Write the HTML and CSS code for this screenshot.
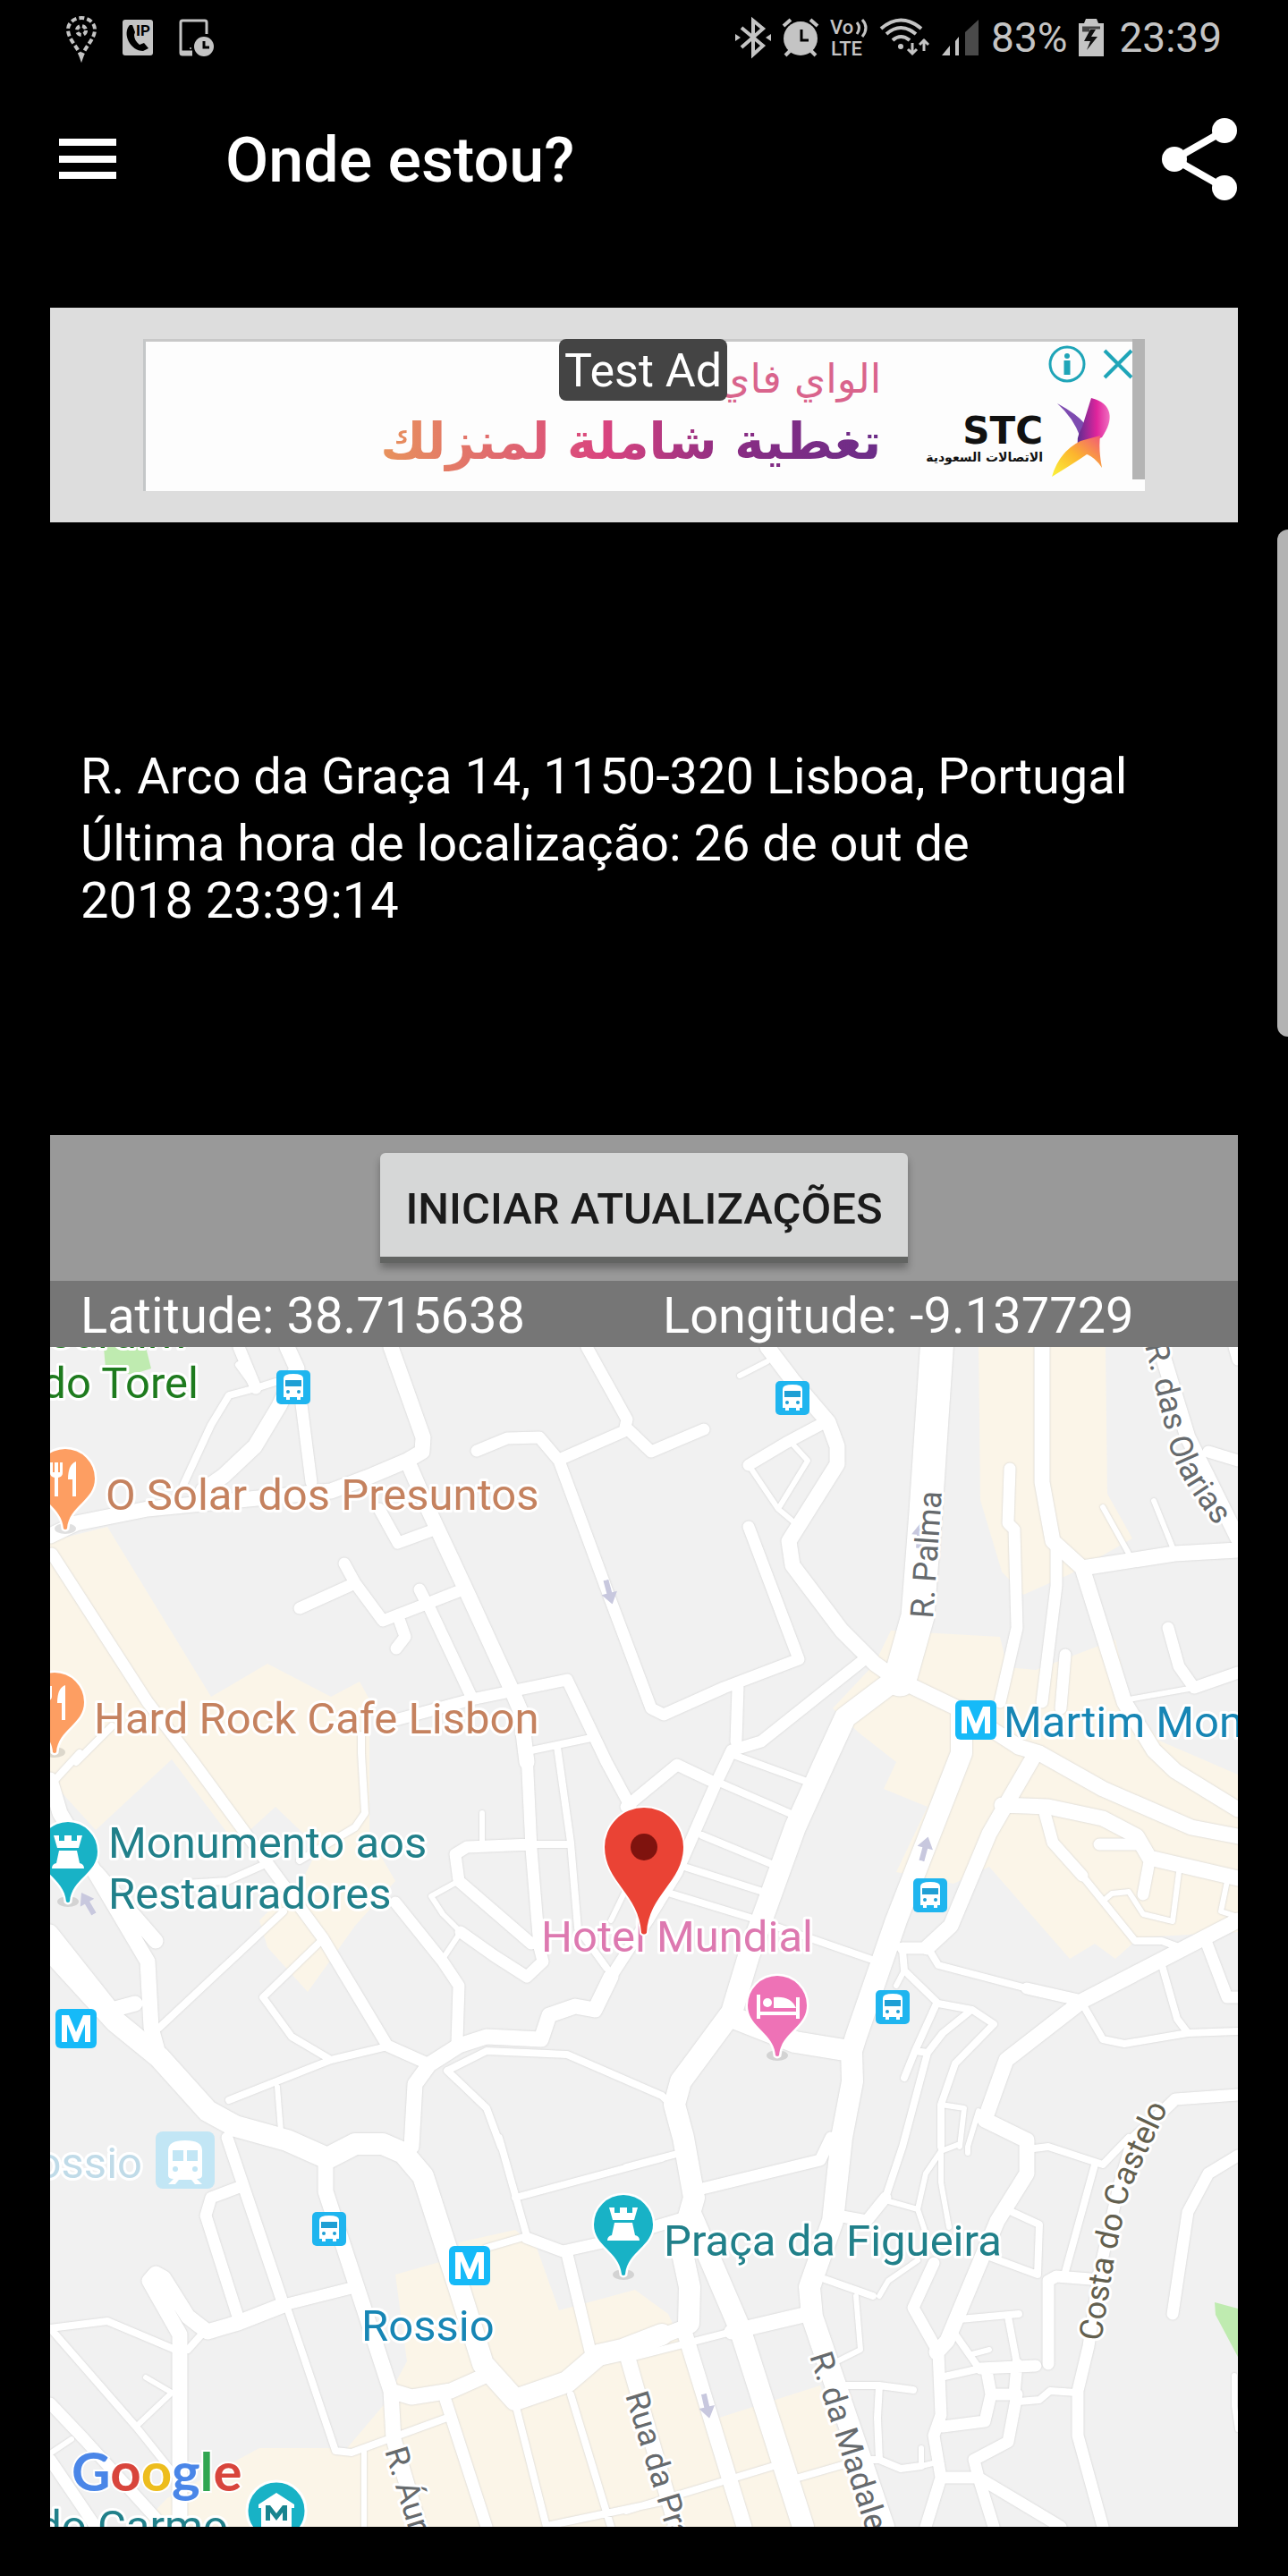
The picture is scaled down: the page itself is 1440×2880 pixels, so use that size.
FILE: index.html
```html
<!DOCTYPE html>
<html lang="pt">
<head>
    <meta charset="UTF-8">
    <meta name="viewport" content="width=device-width, initial-scale=1.0">
    <title>Onde estou?</title>
    <link rel="stylesheet" href="styles.css">
</head>
<body>

    <div class="status-bar">
        <div class="status-group notifications">
            <svg width="34" height="48" viewBox="0 0 34 48" fill="none" stroke="#c4c4c4" stroke-width="4">
                <path d="M17 46C13 34 2 26 2 15a15 13 0 0 1 30 0c0 11-11 19-15 31z" stroke-dasharray="6 3"/>
                <circle cx="17" cy="16" r="5" stroke-dasharray="5 3"/>
            </svg>
            <svg width="36" height="42" viewBox="0 0 36 42">
                <rect x="1" y="1" width="34" height="40" rx="3" fill="#c4c4c4"/>
                <path d="M9 7c-9 10 1 29 15 29l6-3-5-6-5 2c-4-3-6-7-6-11l1-3-3-8z" fill="#000"/>
                <text class="ip-text" x="16" y="19">IP</text>
            </svg>
            <svg width="40" height="42" viewBox="0 0 40 42" fill="none">
                <path d="M31 17V4q0-2-2-2H4Q2 2 2 4v34q0 2 2 2h11M3 37h12" stroke="#c4c4c4" stroke-width="3"/>
                <circle cx="28" cy="31" r="11" fill="#c4c4c4"/>
                <path d="M28 25v7h6" stroke="#000" stroke-width="3"/>
                <circle cx="13" cy="33" r="1" fill="#c4c4c4"/>
            </svg>
        </div>
        <div class="status-group system">
            <svg width="40" height="44" viewBox="0 0 40 44">
                <path d="M7 11l24 20-11 10V3l11 9L7 33" fill="none" stroke="#c4c4c4" stroke-width="4"/>
                <path d="M0 18l6 4-6 4zM40 18l-6 4 6 4z" fill="#c4c4c4"/>
            </svg>
            <svg width="42" height="44" viewBox="0 0 42 44">
                <circle cx="21" cy="23" r="19" fill="#c4c4c4"/>
                <path d="M2 9l8-7M40 9l-8-7M9 37l-5 5M33 37l5 5" stroke="#c4c4c4" stroke-width="4"/>
                <path d="M22 13v12h8" fill="none" stroke="#000" stroke-width="3"/>
            </svg>
            <svg width="44" height="44" viewBox="0 0 44 44">
                <text class="volte-text" x="0" y="18">Vo</text>
                <text class="volte-text" x="1" y="42">LTE</text>
                <path d="M30 5q5 6 0 13M36 2q8 9 0 19" fill="none" stroke="#c4c4c4" stroke-width="3"/>
            </svg>
            <svg width="56" height="44" viewBox="0 0 56 44" fill="none" stroke="#c4c4c4" stroke-width="4">
                <path d="M1 12Q23-7 46 12M7 18q16-14 33 0M14 25q9-8 19 0"/>
                <circle cx="23" cy="32" r="3" fill="#c4c4c4" stroke="none"/>
                <path d="M36 28v12M31 35l5 5 5-5M49 37V24M44 30l5-5 5 5" stroke-width="3"/>
            </svg>
            <svg width="44" height="44" viewBox="0 0 44 44">
                <path d="M1 42l9-11v11zM16 42V26l4-5v21z" fill="#c4c4c4"/>
                <path d="M27 42V16L42 2v40z" fill="#4a4a4a"/>
            </svg>
            <span class="battery-level">83%</span>
            <svg width="30" height="44" viewBox="0 0 30 44">
                <path d="M1 6h6l2-5h12l2 5h6v37H1z" fill="#c4c4c4"/>
                <path d="M5 11h20M5 14h8" stroke="#444" stroke-width="3"/>
                <path d="M14 13l-7 13h7l-4 10 12-15h-7l5-8z" fill="#111"/>
            </svg>
            <span class="clock">23:39</span>
        </div>
    </div>

    <header class="app-bar">
        <button class="icon-btn" aria-label="Menu">
            <svg width="64" height="48" viewBox="0 0 64 48"><path d="M0 5h64M0 24h64M0 42h64" stroke="#fff" stroke-width="8"/></svg>
        </button>
        <h1>Onde estou?</h1>
        <button class="icon-btn" aria-label="Partilhar">
            <svg width="86" height="92" viewBox="0 0 86 92">
                <path d="M71 14L15 46l56 32" fill="none" stroke="#fff" stroke-width="8"/>
                <circle cx="71" cy="14" r="14" fill="#fff"/><circle cx="15" cy="46" r="14" fill="#fff"/><circle cx="71" cy="78" r="14" fill="#fff"/>
            </svg>
        </button>
    </header>

    <main>
        <section class="ad">
            <div class="banner">
                <span class="test-ad">Test Ad</span>
                <div class="ad-copy" lang="ar" dir="rtl">
                    <p class="ad-line-small">الواي فاي</p>
                    <p class="ad-line-big">تغطية شاملة لمنزلك</p>
                </div>
                <div class="sponsor">
                    <div class="sponsor-name">
                        <strong>STC</strong>
                        <span lang="ar" dir="rtl">الاتصالات السعودية</span>
                    </div>
                    <svg width="72" height="92" viewBox="0 0 72 92">
                        <defs>
                            <linearGradient id="wing" x1="0" y1="0" x2="1" y2="0"><stop offset="0" stop-color="#5c2d91"/><stop offset=".6" stop-color="#e0249c"/><stop offset="1" stop-color="#f06fc0"/></linearGradient>
                            <linearGradient id="tail" x1="1" y1="0" x2="0" y2="1"><stop offset="0" stop-color="#f2567a"/><stop offset=".5" stop-color="#fcb52e"/><stop offset="1" stop-color="#fbf43a"/></linearGradient>
                        </defs>
                        <path d="M10 8q22 12 30 22l-4 16Q28 24 10 8z" fill="#7d4bb0"/>
                        <path d="M48 2c24 6 26 24 12 44L34 56q-4-8 4-22z" fill="url(#wing)"/>
                        <path d="M58 44q-2 16 2 36-8-12-17-15Q30 74 4 90 12 62 36 50z" fill="url(#tail)"/>
                    </svg>
                </div>
                <div class="ad-controls">
                    <button aria-label="Informações do anúncio">
                        <svg width="44" height="44" viewBox="0 0 44 44"><circle cx="22" cy="22" r="19" fill="none" stroke="#1fa5b8" stroke-width="3"/><circle cx="22" cy="13" r="3" fill="#1fa5b8"/><path d="M22 18v16" stroke="#1fa5b8" stroke-width="7"/></svg>
                    </button>
                    <button aria-label="Fechar anúncio">
                        <svg width="32" height="32" viewBox="0 0 32 32"><path d="M1 1l30 30M31 1L1 31" stroke="#1fa5b8" stroke-width="4"/></svg>
                    </button>
                </div>
                <span class="ad-scroll"></span>
            </div>
        </section>

        <section class="address">
            <p>R. Arco da Graça 14, 1150-320 Lisboa, Portugal</p>
            <p>Última hora de localização: 26 de out de<br>2018 23:39:14</p>
        </section>

        <div class="actions">
            <button class="update-btn">INICIAR ATUALIZAÇÕES</button>
        </div>

        <div class="coords">
            <span>Latitude: 38.715638</span>
            <span>Longitude: -9.137729</span>
        </div>

        <svg class="map" viewBox="0 0 1328 1319" role="img" aria-label="Mapa">
            <defs>
                <symbol id="bus" viewBox="0 0 38 38">
                    <rect width="38" height="38" rx="5" fill="#1fb5ef"/>
                    <path d="M8 9q0-5 11-5t11 5v21h-3v3h-4v-3h-8v3h-4v-3H8z" fill="#fff"/>
                    <path d="M10 11h18v7H10z" fill="#1f9fd4"/>
                    <circle cx="13" cy="24" r="2" fill="#1f9fd4"/><circle cx="25" cy="24" r="2" fill="#1f9fd4"/>
                </symbol>
                <symbol id="metro" viewBox="0 0 46 44">
                    <rect width="46" height="44" rx="6" fill="#16baf8"/>
                    <path d="M7 37V7h8l8 19 8-19h8v30h-6V17l-8 20h-4l-8-20v20z" fill="#fff"/>
                </symbol>
                <symbol id="pin" viewBox="-36 -36 72 96" overflow="visible">
                    <ellipse cx="0" cy="56" rx="12" ry="6" fill="#000" opacity=".12"/>
                    <path d="M-2 56C-4 30-33 25-33 0a33 33 0 0 1 66 0C33 25 4 30 2 56q-2 2-4 0z" stroke="#fff" stroke-width="5" paint-order="stroke"/>
                </symbol>
                <symbol id="tower" viewBox="0 0 40 40">
                    <path d="M4 1h6v6h6V1h8v6h6V1h6l-4 14H8zM10 18h20l3 14q5 1 5 6H2q0-5 5-6z" fill="#fff"/>
                </symbol>
                <symbol id="fork" viewBox="0 0 34 40">
                    <path d="M2 1v12q0 4 5 5v21h4V18q5-1 5-5V1h-3v11h-2V1H7v11H5V1zM31 0q-9 3-9 20h5v19h4z" fill="#fff"/>
                </symbol>
                <symbol id="arrow" viewBox="0 0 18 28">
                    <path d="M9 0l9 13h-6v15H6V13H0z" fill="#c8c8de"/>
                </symbol>
                <path id="olarias" d="M1224-2L1237 50L1252 112Q1262 150 1312 210"/>
                <path id="castelo" d="M1175 1112L1190 1018L1206 944L1250 850"/>
            </defs>

            <!-- commercial areas and parks -->
            <g fill="#fbf5e8">
                <path d="M0 217L64 201L180 391L243 354L314 391L346 374L357 394V547L386 597L341 647L288 721L243 671L234 641L285 590L300 560L252 514L207 555L136 461L51 540L0 484z"/>
                <path d="M1038 0H1180L1182 164L1210 214L1140 254L1088 277L1064 251L1040 171z"/>
                <path d="M922 354L940 317L1062 324L1070 358L1102 361L1191 327L1206 394L1240 440L1328 478V654L1218 660L1191 684L1168 667L1140 684L1050 581L1010 600L946 587L981 514L932 494L946 464L904 431L875 404z"/>
                <path d="M386 1037L457 1017V1001L520 987L544 1007L569 1077L654 1054L691 1081L708 1117L748 1197L861 1161L922 1319H100L131 1287L234 1231H332L372 1184L399 1134z"/>
            </g>
            <path d="M60 0H107L113 24L91 31L62 24zM1302 1068L1328 1075V1129L1303 1082z" fill="#bfebb0"/>

            <g class="roads">
                <g class="lane-xs">
                    <path d="M802 16L771 32M781 132L814 181L833 197M826 104L847 127L814 181M645 604L627 641M1234 172L1255 224M1177 179L1206 231M1206 394L1279 381"/>
                    <path d="M955 697L946 714M1180 617L1187 611L1206 609L1222 634L1255 642L1262 587M1316 597L1309 631L1328 637"/>
                    <path d="M996 847L1022 851L1017 894M1038 854L1026 894V901M996 884V934L1005 984M1017 891L996 899L979 924L970 964L979 991M934 954L970 964"/>
                    <path d="M970 1021L937 1044L927 1061M901 1061L906 1121L880 1134M1031 1126L1050 1121M974 1251L974 1231M974 1251L991 1247"/>
                    <path d="M351 1234V1319M96 1207L136 1169L107 1152M0 1237L24 1221M254 827L258 877M483 521V554M439 684L459 654L439 634L426 614L457 597M1324 1150V1184L1328 1210"/>
                </g>
                <g class="lane-s">
                    <path d="M211 20L230 46L200 54L180 87L149 154M230 46L252 39M538 451L605 437M567 447L582 554L590 650L622 694M764 456L849 487M748 487L833 524M729 546L809 579M712 582L797 609M694 611L786 639L922 686"/>
                    <path d="M981 671L993 691L1092 717M1154 591L1213 664H1243L1262 671M1243 691L1260 751L1272 767L1328 765M1154 734L1177 774L1201 779L1272 767"/>
                    <path d="M953 674L955 697L993 734L1031 741L1055 757L1012 801L996 847V894M991 734L967 787L955 817M1029 742L998 767L981 789L953 894L934 951M967 787L981 789"/>
                    <path d="M1069 964L1106 981L1104 1037L1050 1017M866 1042L920 1061M1017 1087L1083 1081M1071 1084L1081 1137M1012 1104L1040 1144M1000 1151L1040 1142"/>
                    <path d="M1083 1179L1106 1177L1118 1167L1147 1169M885 1161H927L965 1166M927 1161L925 1197L927 1244L951 1254L974 1251M900 1244H927M1168 914L1135 1034M1092 897L1116 894L1177 914L1206 884"/>
                    <path d="M653 1129L762 1101M644 1301L809 1251M837 1264L889 1249M644 917L701 902M684 907L520 951M502 884L533 994L488 1007M520 1181L555 1319M582 1171L627 1319M560 1317L684 1291"/>
                    <path d="M265 1074L319 1234L337 1236L444 1197M0 1097L64 1089L140 1121M154 1121L172 1101M0 1097L96 1207L140 1262M33 454L0 490M69 424L29 464"/>
                    <path d="M348 434V454L352 521L341 537L279 574M243 577L198 597L150 600M261 631L122 761M303 664L238 727L270 771L314 797M200 842L314 797L377 782M538 556H580M444 809L488 787L578 791L684 837L698 850M444 809L488 851L504 894"/>
                </g>
                <g class="lane-m">
                    <path d="M211 0L230 46M281 64L292 151M368 181L389 219L430 204M329 242L341 264L372 306L421 287L462 271M279 292L341 264M413 271L421 287M390 304L397 324L387 337M424 291L471 391M386 417L471 394L578 372L622 464L649 514"/>
                    <path d="M477 116L511 102L547 101L569 127L627 284L672 404L686 411L753 381L837 349L781 201M600 0L645 81L642 94L569 126M645 91L672 117L731 92M870 82L823 107L781 132M769 381L767 441"/>
                    <path d="M1073 136L1071 197L1078 204L1081 314L1062 397M1125 224V267L1109 397M1135 344L1130 404M1250 314L1262 357L1279 381L1328 364M1295 117L1328 127M1324 0L1328 14"/>
                    <path d="M908 351L795 441L762 451L743 491L701 587L668 641L627 704M743 487L701 467L644 514M953 672H981M1173 556H1215M1229 575L1222 612M1111 517L1121 554L1154 591M1092 717L1154 731M1291 661L1316 727H1328"/>
                    <path d="M934 951L913 977L880 971M988 1024L965 1074L993 1124L996 1194L988 1217L996 1264L979 1319M1040 1142L1102 1139M1047 1144L1052 1171H1078L1081 1137M1052 1171L1045 1201L998 1207M1081 1171L1071 1224L1033 1244L1038 1264L1055 1319M1038 1264L1130 1319M998 1264H1038"/>
                    <path d="M1328 836L1258 841L1210 887L1196 934L1173 1034L1161 1117L1149 1167V1217L1177 1319M1116 1137V1044L1125 1039L1163 1042M1328 904L1295 924L1272 967L1255 1081"/>
                    <path d="M729 941L861 909L873 884M533 996L573 1011L618 1001L717 971M578 1014L605 1127M442 1177L488 1319M198 884L261 1071M212 939L180 951L174 971L209 1081M341 1051L261 1071"/>
                    <path d="M0 1181L38 1221L127 1319M0 1244L51 1319M2 231L109 397L158 461L243 577L305 661L377 781L424 802M386 621L439 687L457 714L455 777M538 556L466 559L453 567L457 597L538 667M533 454L538 561L547 671L551 687L533 704L497 681L459 654"/>
                </g>
                <g class="lane-l">
                    <path d="M265 0L276 24L256 66L229 111L194 144L171 160M381 0L417 101L416 117L399 127L354 146L314 161L109 181L29 197L0 211M401 131L424 184L466 274L515 381L526 407L533 464"/>
                    <path d="M802 0L830 37L870 84L880 111V131L826 217L830 244L885 317L922 354L946 371L1021 407L1083 447M1109 0V151L1121 217L1154 247L1201 397L1234 451L1258 474L1328 517M1154 247L1257 231L1328 227M1241 0L1272 101L1328 214"/>
                    <path d="M627 704L609 741L587 737L558 747L549 774L488 771L457 781L424 802L408 824L404 894M1102 454L1069 511L1050 544L1007 647L981 671M1083 447L1106 454L1177 494L1276 537L1328 547M1064 512L1116 514L1177 527L1215 547L1229 571L1328 594"/>
                    <path d="M1328 641L1154 731L1069 797L1045 864L1092 887V924L1059 977L1003 1111L991 1124M708 1097L776 1319M762 1101L847 1081M644 1121L715 1094M308 907V944L381 1167L384 1221L413 1319M381 1167L404 1174L448 1167L484 1151"/>
                    <path d="M210 1091L176 1101L154 1084L127 1041L118 1036L111 1044L145 1104V1319M261 1071L210 1091M645 1127L700 1319M0 484L11 521L109 687L113 761L122 794M51 587L118 664M0 654L69 741L95 734"/>
                </g>
                <g class="lane-xl">
                    <path d="M946 371L889 414L866 464L833 537L781 681L762 744L705 821L698 847L708 884L720 951L705 1004L715 1051L714 1091M717 971L771 1097L842 1319M1019 407V454L946 641L901 771L896 787L897 821L885 884L875 977L849 1051L852 1084L932 1319M767 751L833 777L894 787"/>
                    <path d="M684 1104L640 1121L613 1127L578 1157L520 1177L484 1137L457 1051L417 927L395 901L372 891H341L310 907L265 887L207 871L176 854L122 794L73 754L0 674"/>
                </g>
                <path class="avenue" d="M992-10L979 184L970 301L950 372"/>
            </g>

            <use href="#arrow" x="-9" y="-14" width="18" height="28" transform="translate(625 274) rotate(165)"/>
            <use href="#arrow" x="-9" y="-14" width="18" height="28" transform="translate(42 622) rotate(-30)"/>
            <use href="#arrow" x="-9" y="-14" width="18" height="28" transform="translate(978 561) rotate(15)"/>
            <use href="#arrow" x="-9" y="-14" width="18" height="28" transform="translate(734 1184) rotate(167)"/>
            <use href="#arrow" x="-9" y="-14" width="18" height="28" transform="translate(972 211) rotate(4)"/>

            <g class="street">
                <text transform="translate(987 304) rotate(-86)">R. Palma</text>
                <text><textPath href="#olarias">R. das Olarias</textPath></text>
                <text class="street-brown"><textPath href="#castelo">Costa do Castelo</textPath></text>
                <text transform="translate(643 1172) rotate(73)">Rua da Prata</text>
                <text transform="translate(374 1234) rotate(73)">R. Áurea</text>
                <text transform="translate(849 1128) rotate(72)">R. da Madalena</text>
            </g>

            <g class="stops">
                <use href="#bus" x="253" y="26" width="38" height="38"/>
                <use href="#bus" x="811" y="38" width="38" height="38"/>
                <use href="#bus" x="965" y="594" width="38" height="38"/>
                <use href="#bus" x="923" y="719" width="38" height="38"/>
                <use href="#bus" x="293" y="967" width="38" height="38"/>
                <use href="#metro" x="6" y="740" width="46" height="44"/>
                <use href="#metro" x="446" y="1005" width="46" height="44"/>
                <use href="#metro" x="1012" y="395" width="46" height="44"/>
            </g>
            <rect x="118" y="877" width="66" height="64" rx="8" fill="#c2e6f5"/>
            <path d="M132 898q0-11 19-11t19 11v28q0 4-6 4l6 6h-8l-4-5h-14l-4 5h-8l6-6q-6 0-6-4z" fill="#fff"/>
            <path d="M137 898h12v12h-12zM153 898h12v12h-12z" fill="#c2e6f5"/>
            <circle cx="140" cy="919" r="3" fill="#c2e6f5"/><circle cx="162" cy="919" r="3" fill="#c2e6f5"/>

            <g class="place food">
                <text x="62" y="182">O Solar dos Presuntos</text>
                <text x="49" y="432">Hard Rock Cafe Lisbon</text>
            </g>
            <g class="place park">
                <text x="152" y="1" text-anchor="end">Jardim</text>
                <text x="166" y="57" text-anchor="end">do Torel</text>
            </g>
            <g class="place sight">
                <text x="65" y="571">Monumento aos</text>
                <text x="65" y="628">Restauradores</text>
                <text x="686" y="1016">Praça da Figueira</text>
                <text x="199" y="1335" text-anchor="end">do Carmo</text>
            </g>
            <g class="place transit">
                <text x="1066" y="436">Martim Moniz</text>
                <text x="348" y="1111">Rossio</text>
            </g>
            <text class="place faded" x="103" y="929" text-anchor="end">Rossio</text>
            <text class="place hotel" x="549" y="676">Hotel Mundial</text>

            <g fill="#fd9e62">
                <use href="#pin" x="-19" y="111" width="72" height="96"/>
                <use href="#pin" x="-31" y="361" width="72" height="96"/>
            </g>
            <use href="#fork" x="-2" y="128" width="34" height="40"/>
            <use href="#fork" x="-14" y="378" width="34" height="40"/>
            <g fill="#18b2c6">
                <use href="#pin" x="-16" y="528" width="72" height="96"/>
                <use href="#pin" x="605" y="945" width="72" height="96"/>
                <circle cx="253" cy="1301" r="33" stroke="#fff" stroke-width="3"/>
            </g>
            <use href="#tower" x="0" y="545" width="40" height="40"/>
            <use href="#tower" x="621" y="961" width="40" height="40"/>
            <path d="M253 1281l20 13v4h-3v21h-34v-21h-3v-4z" fill="#fff"/>
            <path d="M241 1312v-17h5l7 9 7-9h5v17h-5v-9l-7 9-7-9v9z" fill="#18848f"/>

            <use href="#pin" x="777" y="700" width="72" height="96" fill="#ee72b6"/>
            <path d="M792 724v27M836 727v24M792 745h44" stroke="#fff" stroke-width="4"/>
            <path d="M809 739v-12q19-2 25 12z" fill="#fff"/><circle cx="802" cy="733" r="5" fill="#fff"/>

            <path d="M661 655C659 612 620 598 620 559a44 44 0 0 1 88 0C708 598 669 612 667 655q-3 3-6 0z" fill="#ea4335" stroke="#fff" stroke-width="4" paint-order="stroke"/>
            <circle cx="664" cy="559" r="15" fill="#7f130e"/>

            <text class="google" x="24" y="1279"><tspan fill="#4a86e8">G</tspan><tspan fill="#d8453c">o</tspan><tspan fill="#edbd1d">o</tspan><tspan fill="#4a86e8">g</tspan><tspan fill="#31a651">l</tspan><tspan fill="#d8453c">e</tspan></text>
        </svg>
    </main>

    <span class="edge-handle"></span>

</body>
</html>
```
FILE: styles.css
```css
* {
    box-sizing: border-box;
}
body {
    position: relative;
    margin: 0;
    padding-bottom: 55px;
    background-color: #000;
    color: #fff;
    font-family: Roboto, "Liberation Sans", sans-serif;
}
button {
    border: none;
    padding: 0;
    background: none;
    font-family: inherit;
    cursor: pointer;
}
svg {
    display: block;
    overflow: visible;
}
p {
    margin: 0;
}

/* Status bar */
.status-bar {
    display: flex;
    justify-content: space-between;
    align-items: center;
    height: 84px;
    padding: 0 74px;
    color: #c4c4c4;
    font-size: 46px;
}
.status-group {
    display: flex;
    align-items: center;
}
.notifications {
    gap: 28px;
}
.system {
    gap: 12px;
}
.clock {
    margin-left: 4px;
}
.ip-text {
    font-size: 17px;
    font-weight: 700;
}
.volte-text {
    font-size: 22px;
    font-weight: 500;
    fill: #c4c4c4;
}

/* App bar */
.app-bar {
    display: flex;
    align-items: center;
    height: 188px;
    padding: 0 56px 0 66px;
}
.app-bar h1 {
    flex: 1;
    margin: 0 0 0 122px;
    padding-top: 2px;
    font-size: 70px;
    font-weight: 500;
}

main {
    margin: 72px 56px 0;
}

/* Ad */
.ad {
    display: flex;
    justify-content: center;
    align-items: center;
    height: 240px;
    background-color: #ddd;
}
.banner {
    position: relative;
    display: flex;
    justify-content: flex-end;
    width: 1120px;
    height: 170px;
    padding-right: 36px;
    border-top: 3px solid #c8c8c8;
    border-left: 3px solid #c4c7c8;
    background-color: #fdfdfd;
}
.test-ad {
    position: absolute;
    top: -3px;
    left: 462px;
    padding: 2px 6px 0;
    border-radius: 8px;
    background-color: #444;
    font-size: 52px;
    line-height: 67px;
}
.ad-copy {
    font-family: "DejaVu Sans", sans-serif;
    padding-top: 12px;
    white-space: nowrap;
}
.ad-line-small {
    color: #d9648c;
    font-size: 45px;
    line-height: 60px;
}
.ad-line-big {
    background: linear-gradient(90deg, #e8935c, #d9447f 45%, #8a2c83 70%, #6b2d88);
    -webkit-background-clip: text;
    background-clip: text;
    color: transparent;
    font-size: 56px;
    font-weight: 700;
    line-height: 80px;
}
.sponsor {
    display: flex;
    align-items: flex-end;
    gap: 6px;
    margin-left: 50px;
    padding-bottom: 14px;
}
.sponsor-name {
    display: flex;
    flex-direction: column;
    align-items: flex-end;
    padding-bottom: 14px;
    color: #111;
    font-family: "DejaVu Sans", sans-serif;
}
.sponsor-name strong {
    font-size: 42px;
    line-height: 38px;
}
.sponsor-name span {
    font-size: 14px;
    font-weight: 700;
    line-height: 20px;
}
.ad-controls {
    position: absolute;
    top: 3px;
    right: 14px;
    display: flex;
    align-items: center;
    gap: 19px;
}
.ad-scroll {
    position: absolute;
    top: -3px;
    right: 0;
    width: 14px;
    height: 157px;
    background-color: #b4b4b4;
}

/* Address */
.address {
    display: flex;
    flex-direction: column;
    gap: 11px;
    height: 685px;
    padding: 252px 34px 0;
    font-size: 56px;
    line-height: 64px;
}

/* Update button and coordinates */
.actions {
    display: flex;
    justify-content: center;
    padding: 20px 0;
    background-color: #999;
}
.update-btn {
    height: 123px;
    padding: 8px 28px 0;
    border-bottom: 7px solid #626462;
    border-radius: 6px 6px 0 0;
    background-color: #d6d7d7;
    box-shadow: 0 6px 8px rgba(0, 0, 0, 0.3);
    color: #1b1b1b;
    font-size: 49px;
    font-weight: 500;
}
.coords {
    display: grid;
    grid-template-columns: 1fr 1fr;
    gap: 8px;
    padding: 7px 0 3px 34px;
    background-color: #767676;
    font-size: 56px;
    line-height: 64px;
}

/* Map */
.map {
    width: 100%;
    background-color: #f1f1f1;
    overflow: hidden;
}
.roads {
    fill: none;
    stroke: #fff;
    stroke-linecap: round;
    stroke-linejoin: round;
    filter: drop-shadow(0 0 1px #ccc);
}
.lane-xs {
    stroke-width: 6px;
}
.lane-s {
    stroke-width: 8px;
}
.lane-m {
    stroke-width: 13px;
}
.lane-l {
    stroke-width: 17px;
}
.lane-xl {
    stroke-width: 24px;
}
.avenue {
    stroke-width: 37px;
}
.place,
.street {
    stroke: #fff;
    stroke-width: 6px;
    stroke-linejoin: round;
    paint-order: stroke;
}
.place {
    font-size: 49px;
}
.street {
    fill: #666a6d;
    font-size: 36px;
}
.street-brown {
    fill: #63604f;
}
.food {
    fill: #c5825f;
}
.park {
    fill: #1e7b1e;
}
.sight {
    fill: #21808a;
}
.transit {
    fill: #1786b5;
}
.faded {
    fill: #c0dbe8;
}
.hotel {
    fill: #dd79b0;
}
.google {
    font-family: Lato, sans-serif;
    font-size: 60px;
    font-weight: 700;
    stroke: #fff;
    stroke-width: 4px;
    paint-order: stroke;
}

/* Edge panel handle */
.edge-handle {
    position: absolute;
    top: 592px;
    right: 0;
    width: 12px;
    height: 567px;
    border-radius: 12px 0 0 12px;
    background-color: #b3b3b3;
}
```
